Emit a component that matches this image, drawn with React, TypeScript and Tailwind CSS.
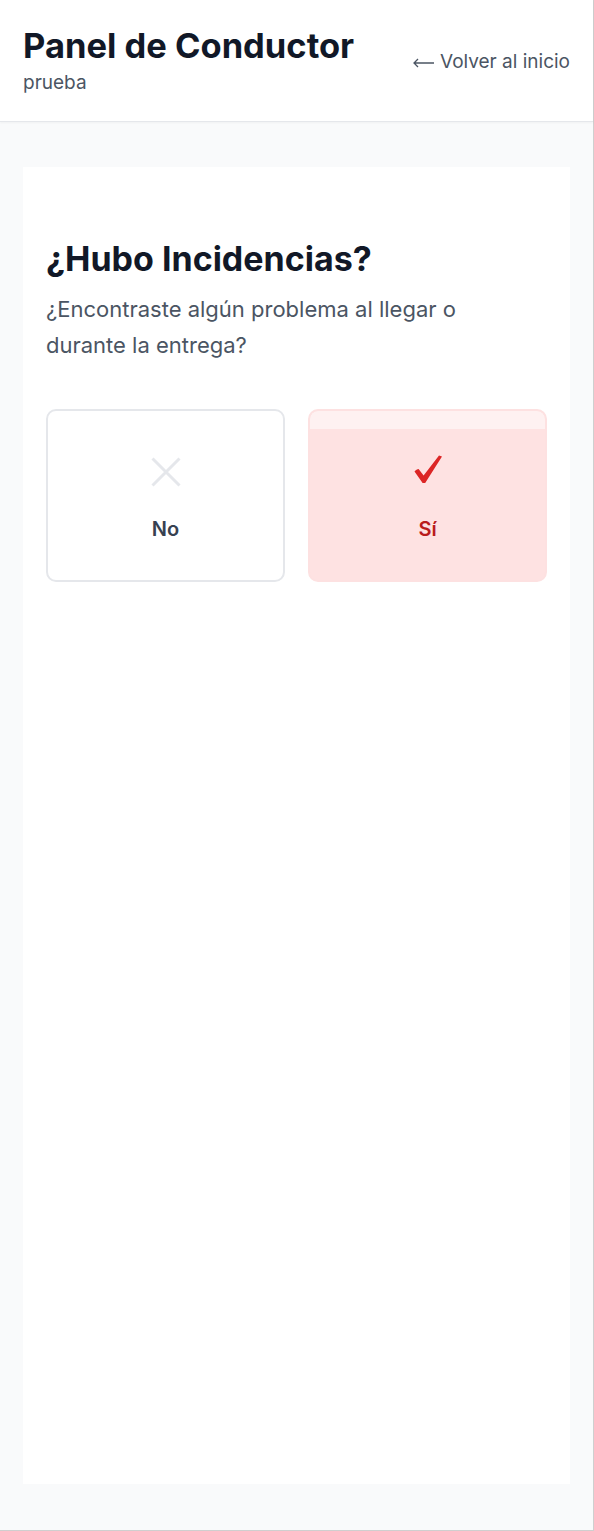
import React from "react";

export default function App() {
  return (
    <div
      className="w-[594px] min-h-[1531px] bg-[#f9fafb] border-r border-b border-[#cfcfcf] flex flex-col"
      style={{ fontFamily: "Inter, 'Noto Sans', sans-serif" }}
    >
      <header className="bg-white border-b border-[#e5e7eb] shadow-[0_1px_2px_rgba(0,0,0,0.04)] h-[122px] px-[23px] flex items-center justify-between">
        <div className="flex flex-col">
          <h1 className="text-[34.5px] leading-[40px] font-bold text-[#111827]">
            Panel de Conductor
          </h1>
          <p className="text-[19px] leading-[26px] text-[#4b5563] mt-[4px]">prueba</p>
        </div>
        <a className="flex items-center gap-[6px] text-[19px] leading-[26px] text-[#4b5563] mt-[2px]">
          <svg width="21" height="10" viewBox="0 0 21 10" className="mt-[2px]">
            <path d="M1 5 H21 M5 1 L1 5 L5 9" stroke="#4b5563" strokeWidth="1.3" fill="none" />
          </svg>
          <span>Volver al inicio</span>
        </a>
      </header>
      <main className="flex-1 px-[23px] pt-[45px] pb-[46px] flex">
        <div className="flex-1 bg-white px-[23px] pt-[72px]">
          <h2 className="text-[34px] leading-[40px] font-bold text-[#111827]">
            ¿Hubo Incidencias?
          </h2>
          <p className="mt-[12px] max-w-[470px] text-[22px] leading-[36px] text-[#4b5563]">
            ¿Encontraste algún problema al llegar o durante la entrega?
          </p>
          <div className="mt-[46px] grid grid-cols-2 gap-[23px]">
            <button className="h-[173px] rounded-[10px] border-2 border-[#e5e7eb] bg-white flex flex-col items-center pt-[46px]">
              <svg width="30" height="30" viewBox="0 0 30 30" className="mb-[28px]">
                <path d="M1.5 1.5 L28.5 28.5 M28.5 1.5 L1.5 28.5" stroke="#e5e7eb" strokeWidth="3" fill="none" />
              </svg>
              <span className="text-[20px] leading-[28px] font-semibold text-[#374151]">No</span>
            </button>
            <button className="relative h-[173px] rounded-[10px] border-2 border-[#fde1e1] bg-[#fee2e2] flex flex-col items-center pt-[44px] overflow-hidden">
              <div className="absolute left-0 right-0 top-0 h-[18px] bg-[#fef1f1] rounded-t-[8px]" />
              <svg width="28" height="28" viewBox="0 0 28 28" className="relative mb-[32px]">
                <path
                  d="M0.5 16.5 C1.8 15.2 3.2 14.2 4.6 14 L9.6 20.6 L25 0.4 L28 1.6 L11.2 28 L8.6 28 Z"
                  fill="#dc2626"
                />
              </svg>
              <span className="relative text-[20px] leading-[28px] font-semibold text-[#b91c1c]">Sí</span>
            </button>
          </div>
        </div>
      </main>
    </div>
  );
}
